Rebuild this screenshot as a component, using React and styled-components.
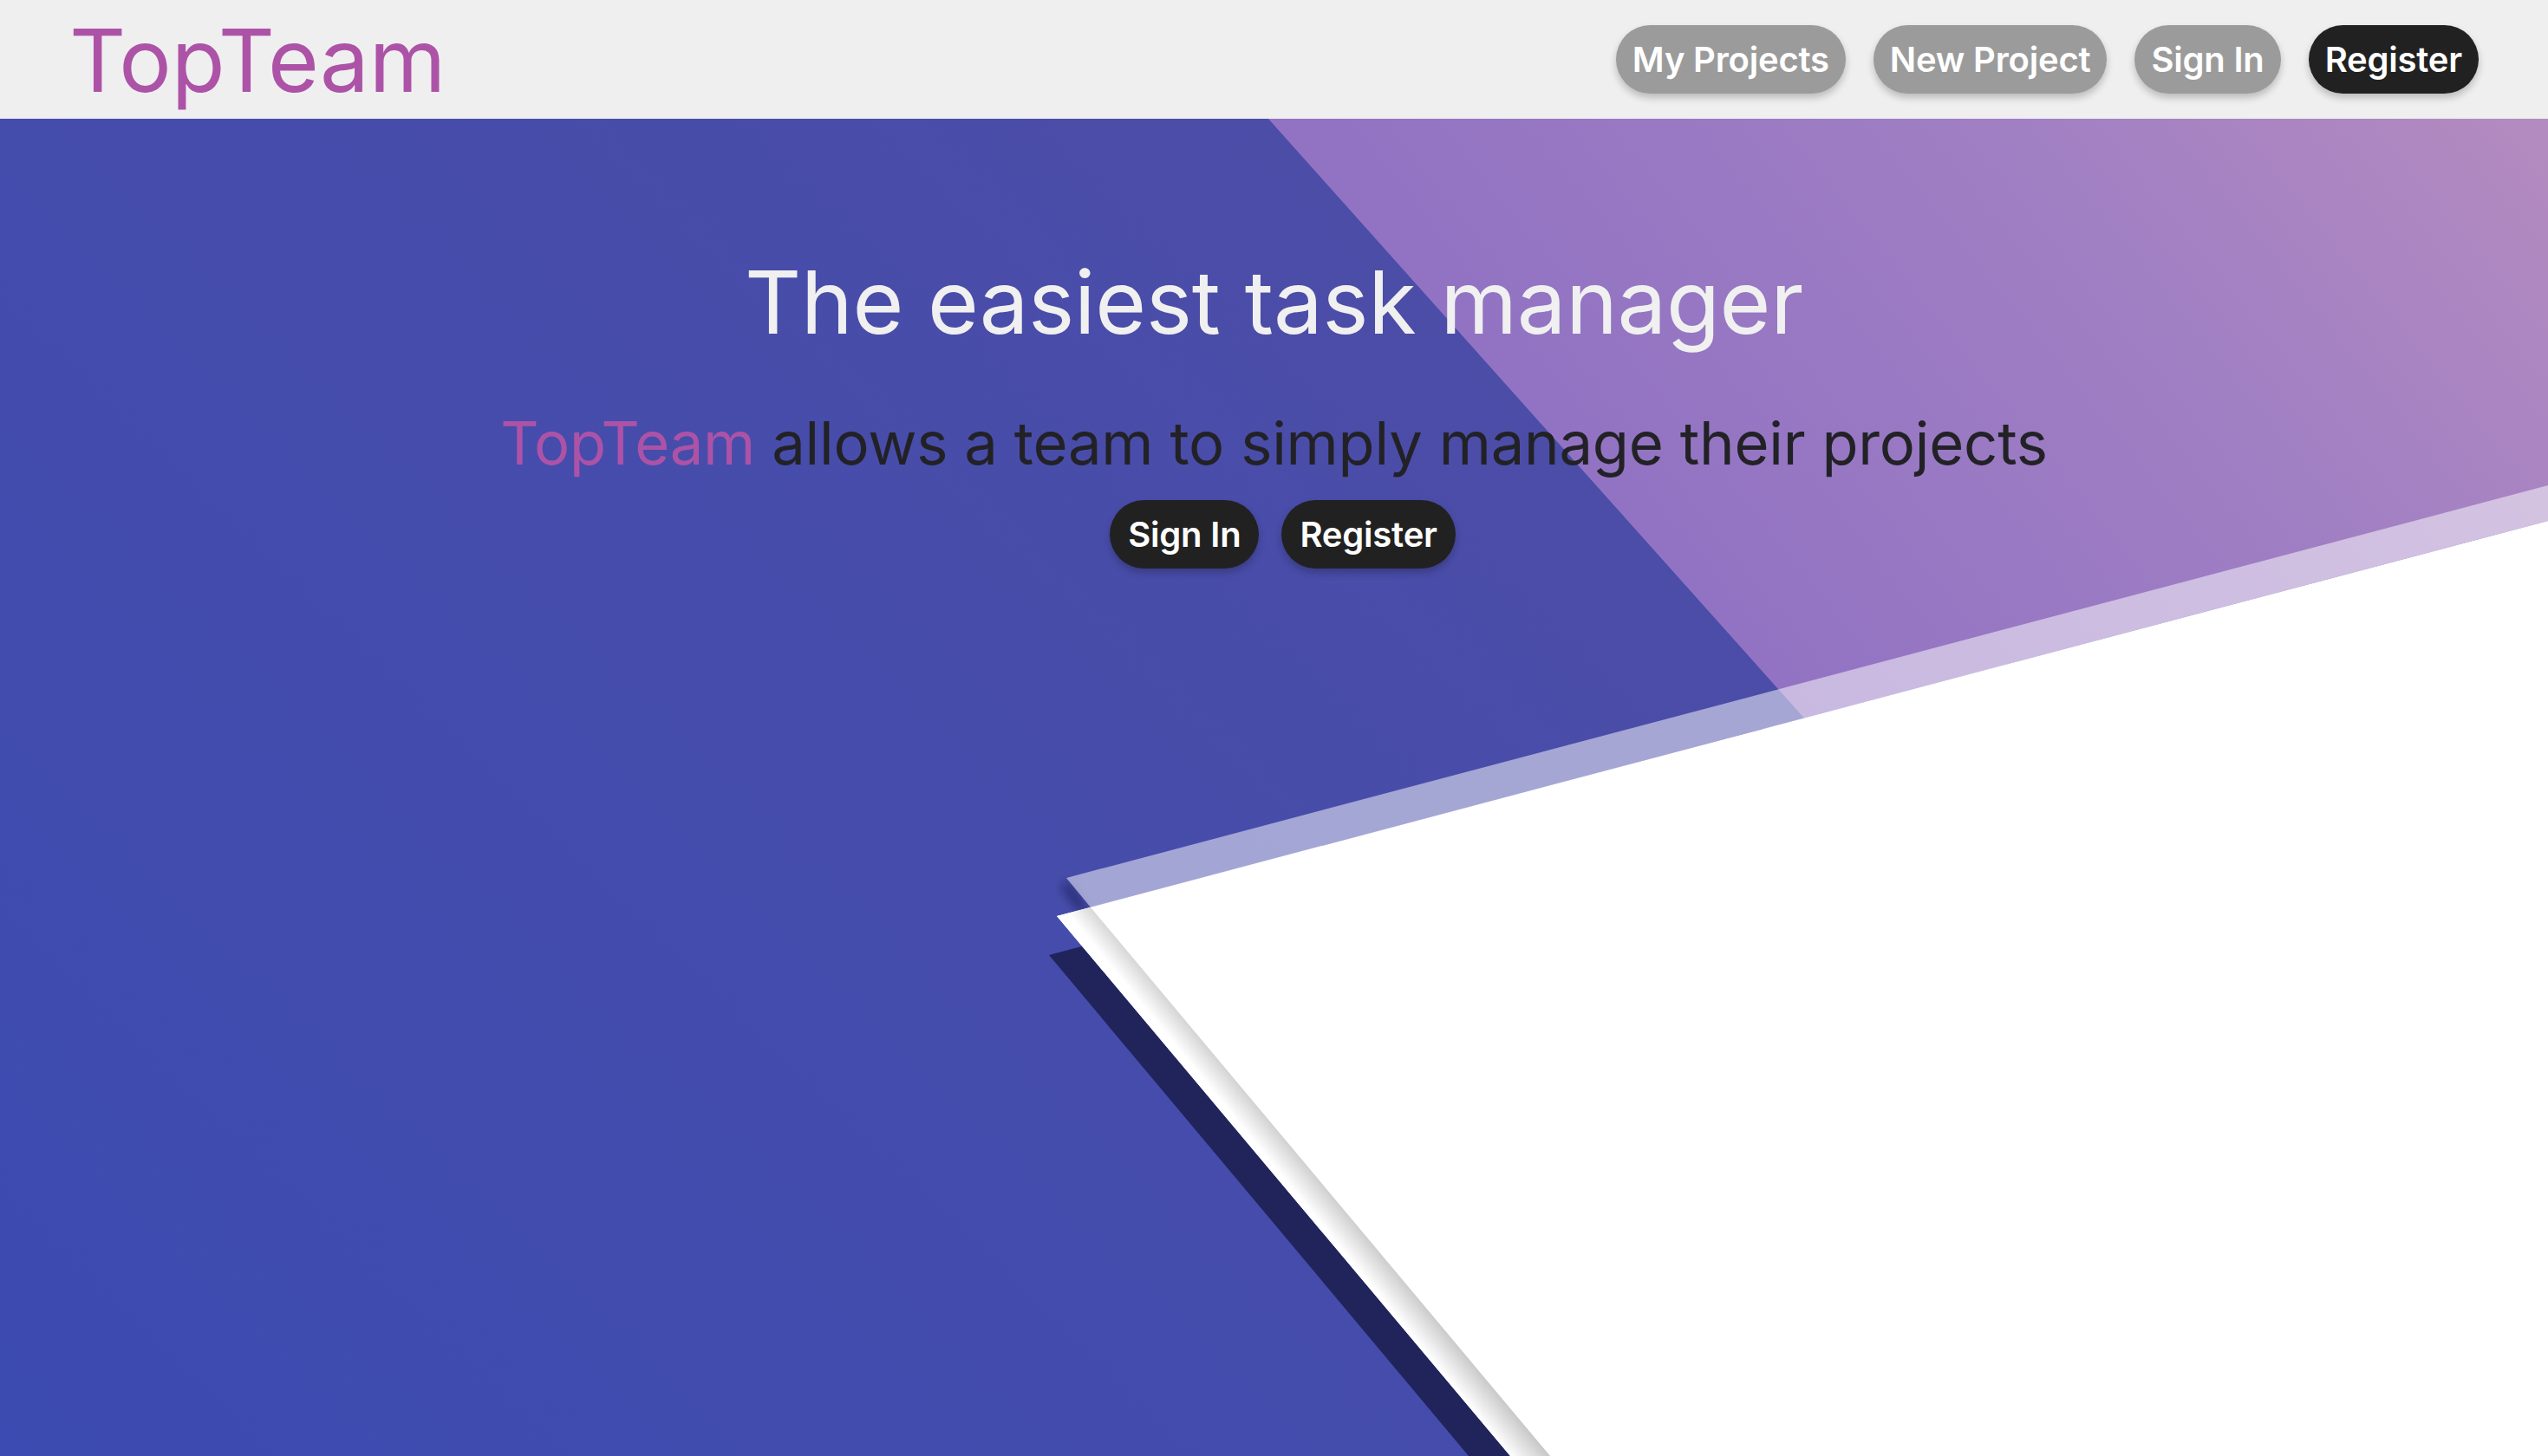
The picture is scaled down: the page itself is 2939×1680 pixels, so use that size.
import React from "react";
import styled, { createGlobalStyle } from "styled-components";

const Global = createGlobalStyle`
  html, body {
    margin: 0;
    padding: 0;
    height: 100%;
  }
  body {
    font-family: Inter, "Noto Sans", "Liberation Sans", sans-serif;
    background: #ffffff;
    overflow: hidden;
  }
  #root {
    height: 100%;
  }
`;

const Page = styled.div`
  display: flex;
  flex-direction: column;
  height: 100vh;
  width: 100%;
`;

const Header = styled.header`
  flex: 0 0 137px;
  height: 137px;
  box-sizing: border-box;
  background: #efefef;
  display: flex;
  align-items: center;
  justify-content: space-between;
  padding: 0 80px 0 80px;
  position: relative;
  z-index: 2;
`;

const Logo = styled.div`
  font-family: Inter, "Noto Sans", sans-serif;
  font-size: 101px;
  line-height: 102px;
  font-weight: 400;
  color: #ad53a7;
`;

const Nav = styled.nav`
  display: flex;
  align-items: center;
  gap: ${(p) => p.$gap || 32}px;
`;

const Pill = styled.button`
  font-family: Inter, "Noto Sans", sans-serif;
  font-size: 40px;
  line-height: 49px;
  font-weight: 600;
  color: #ffffff;
  background: ${(p) => (p.$dark ? "#212121" : "#9b9b9b")};
  border: none;
  border-radius: 40px;
  padding: 15px ${(p) => p.$padX || 19}px;
  cursor: pointer;
  box-shadow: 0 5px 9px rgba(0, 0, 0, 0.22);
  white-space: nowrap;
  letter-spacing: -0.2px;
`;

const Hero = styled.main`
  flex: 1 1 auto;
  position: relative;
  overflow: hidden;
  display: flex;
  flex-direction: column;
  align-items: center;
  padding-top: 150px;
`;

const Backdrop = styled.svg`
  position: absolute;
  inset: 0;
  width: 100%;
  height: 100%;
  z-index: 0;
`;

const Title = styled.h1`
  position: relative;
  z-index: 1;
  margin: 0;
  font-family: Inter, "Noto Sans", sans-serif;
  font-size: 101px;
  line-height: 122px;
  font-weight: 400;
  color: #f0f0f0;
  letter-spacing: -0.3px;
`;

const Subtitle = styled.p`
  position: relative;
  z-index: 1;
  margin: 60px 0 0;
  font-family: Inter, "Noto Sans", sans-serif;
  font-size: 68.7px;
  line-height: 84px;
  font-weight: 400;
  color: #222226;
  letter-spacing: -0.2px;
`;

const Brand = styled.span`
  color: #ad53a7;
`;

const Actions = styled(Nav)`
  position: relative;
  z-index: 1;
  margin: 24px 0 0 20px;
`;

function Background() {
  return (
    <Backdrop viewBox="0 137 2939 1543" preserveAspectRatio="none">
      <defs>
        <linearGradient id="blue" gradientUnits="userSpaceOnUse" x1="1500" y1="137" x2="0" y2="1680">
          <stop offset="0" stopColor="#4c4da7" />
          <stop offset="1" stopColor="#3c4bb1" />
        </linearGradient>
        <linearGradient id="purple" gradientUnits="userSpaceOnUse" x1="2939" y1="137" x2="2080" y2="830">
          <stop offset="0" stopColor="#b48bc0" />
          <stop offset="0.45" stopColor="#a07fc3" />
          <stop offset="1" stopColor="#9273c3" />
        </linearGradient>
        <linearGradient id="fold" gradientUnits="userSpaceOnUse" x1="1742" y1="1680" x2="1769" y2="1658">
          <stop offset="0" stopColor="#ffffff" />
          <stop offset="1" stopColor="#c8c8c8" />
        </linearGradient>
        <filter id="soft" x="-50%" y="-50%" width="200%" height="200%">
          <feGaussianBlur stdDeviation="6" />
        </filter>
      </defs>
      <rect x="0" y="137" width="2939" height="1543" fill="url(#blue)" />
      <polygon points="1463,137 2939,137 2939,601 2081,828.5" fill="url(#purple)" />
      <line x1="1228" y1="1020" x2="1250" y2="1050" stroke="rgba(10,10,40,0.45)" strokeWidth="10" filter="url(#soft)" />
      <polygon points="1210,1102 2939,644 2939,1680 1694,1680" fill="#20245a" />
      <polygon points="1219,1057 2939,601 2939,1680 1742,1680" fill="#ffffff" />
      <polygon points="1219,1057 1258,1047 1788,1680 1742,1680" fill="url(#fold)" />
      <polygon points="1230,1013 2939,560 2939,601 1258,1047" fill="rgba(255,255,255,0.5)" />
    </Backdrop>
  );
}

export default function App() {
  return (
    <>
      <Global />
      <Page>
        <Header>
          <Logo>TopTeam</Logo>
          <Nav $gap={32}>
            <Pill>My Projects</Pill>
            <Pill>New Project</Pill>
            <Pill>Sign In</Pill>
            <Pill $dark>Register</Pill>
          </Nav>
        </Header>
        <Hero>
          <Background />
          <Title>The easiest task manager</Title>
          <Subtitle>
            <Brand>TopTeam</Brand> allows a team to simply manage their projects
          </Subtitle>
          <Actions $gap={26}>
            <Pill $dark $padX={21}>Sign In</Pill>
            <Pill $dark $padX={21}>Register</Pill>
          </Actions>
        </Hero>
      </Page>
    </>
  );
}
